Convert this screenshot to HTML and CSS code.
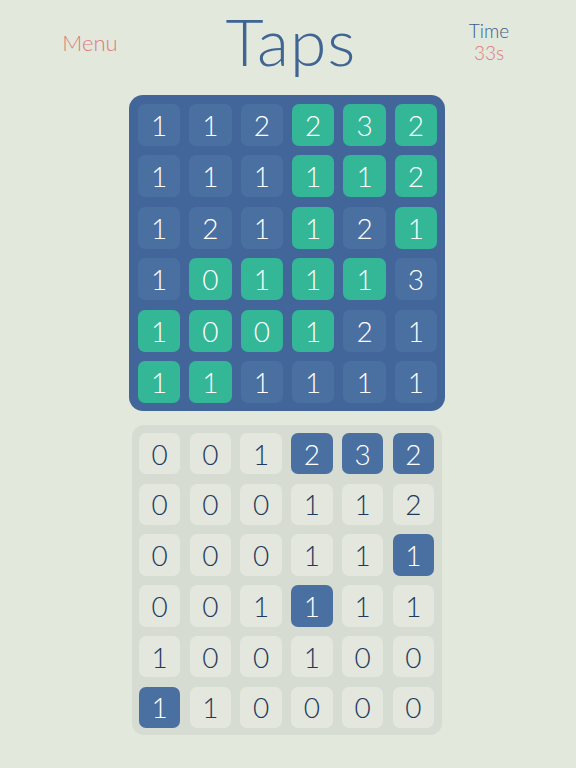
FILE: index.html
```html
<!DOCTYPE html>
<html>
<head>
<meta charset="utf-8">
<link rel="stylesheet" href="styles.css">
</head>
<body>
<header class="top">
  <div class="menu">Menu</div>
  <h1 class="title">Taps</h1>
  <div class="timer"><div class="time-label">Time</div><div class="time-value">33s</div></div>
</header>
<main class="boards">
  <section class="board board-main">
    <div class="cell">1</div><div class="cell">1</div><div class="cell">2</div><div class="cell on">2</div><div class="cell on">3</div><div class="cell on">2</div>
    <div class="cell">1</div><div class="cell">1</div><div class="cell">1</div><div class="cell on">1</div><div class="cell on">1</div><div class="cell on">2</div>
    <div class="cell">1</div><div class="cell">2</div><div class="cell">1</div><div class="cell on">1</div><div class="cell">2</div><div class="cell on">1</div>
    <div class="cell">1</div><div class="cell on">0</div><div class="cell on">1</div><div class="cell on">1</div><div class="cell on">1</div><div class="cell">3</div>
    <div class="cell on">1</div><div class="cell on">0</div><div class="cell on">0</div><div class="cell on">1</div><div class="cell">2</div><div class="cell">1</div>
    <div class="cell on">1</div><div class="cell on">1</div><div class="cell">1</div><div class="cell">1</div><div class="cell">1</div><div class="cell">1</div>
  </section>
  <section class="board board-target">
    <div class="tcell">0</div><div class="tcell">0</div><div class="tcell">1</div><div class="tcell hit">2</div><div class="tcell hit">3</div><div class="tcell hit">2</div>
    <div class="tcell">0</div><div class="tcell">0</div><div class="tcell">0</div><div class="tcell">1</div><div class="tcell">1</div><div class="tcell">2</div>
    <div class="tcell">0</div><div class="tcell">0</div><div class="tcell">0</div><div class="tcell">1</div><div class="tcell">1</div><div class="tcell hit">1</div>
    <div class="tcell">0</div><div class="tcell">0</div><div class="tcell">1</div><div class="tcell hit">1</div><div class="tcell">1</div><div class="tcell">1</div>
    <div class="tcell">1</div><div class="tcell">0</div><div class="tcell">0</div><div class="tcell">1</div><div class="tcell">0</div><div class="tcell">0</div>
    <div class="tcell hit">1</div><div class="tcell">1</div><div class="tcell">0</div><div class="tcell">0</div><div class="tcell">0</div><div class="tcell">0</div>
  </section>
</main>
</body>
</html>
```
FILE: styles.css
```css
html, body {
  margin: 0;
  padding: 0;
}
body {
  width: 576px;
  height: 768px;
  background: #e3e8dd;
  font-family: "Lato", "Open Sans", sans-serif;
  font-weight: 300;
  overflow: hidden;
}
.top {
  display: grid;
  grid-template-columns: 180px 1fr 174px;
  align-items: start;
  height: 95px;
}
.menu {
  text-align: center;
  color: #e0787a;
  font-size: 22px;
  line-height: 26px;
  margin-top: 30px;
}
.title {
  margin: 0;
  text-align: center;
  font-weight: 300;
  color: #3f6593;
  font-size: 66px;
  line-height: 70px;
  margin-top: 6px;
  letter-spacing: 1px;
}
.timer {
  text-align: center;
  font-size: 19px;
  line-height: 22px;
  margin-top: 20px;
}
.time-label { color: #3f5f88; }
.time-value { color: #e0787a; }
.boards {
  display: flex;
  flex-direction: column;
  align-items: center;
  gap: 14px;
}
.board {
  display: grid;
  grid-template-columns: repeat(6, 1fr);
  box-sizing: border-box;
}
.board-main {
  width: 316px;
  height: 316px;
  margin-left: -2px;
  padding: 9px 8px 8px 9px;
  gap: 9.6px 9.2px;
  background: #43669a;
  border-radius: 14px;
}
.cell {
  display: flex;
  align-items: center;
  justify-content: center;
  background: #4a6fa1;
  color: #ffffff;
  border-radius: 7px;
  font-size: 28px;
}
.cell.on {
  background: #33b797;
}
.board-target {
  width: 310px;
  height: 310px;
  margin-left: -2px;
  padding: 8px 8px 7px 7px;
  gap: 9.4px 9.4px;
  background: #d7dcd2;
  border-radius: 12px;
}
.tcell {
  display: flex;
  align-items: center;
  justify-content: center;
  background: #e3e7dd;
  color: #1f3a5e;
  border-radius: 7px;
  font-size: 28px;
}
.tcell.hit {
  background: #4a6fa1;
  color: #ffffff;
}
```
